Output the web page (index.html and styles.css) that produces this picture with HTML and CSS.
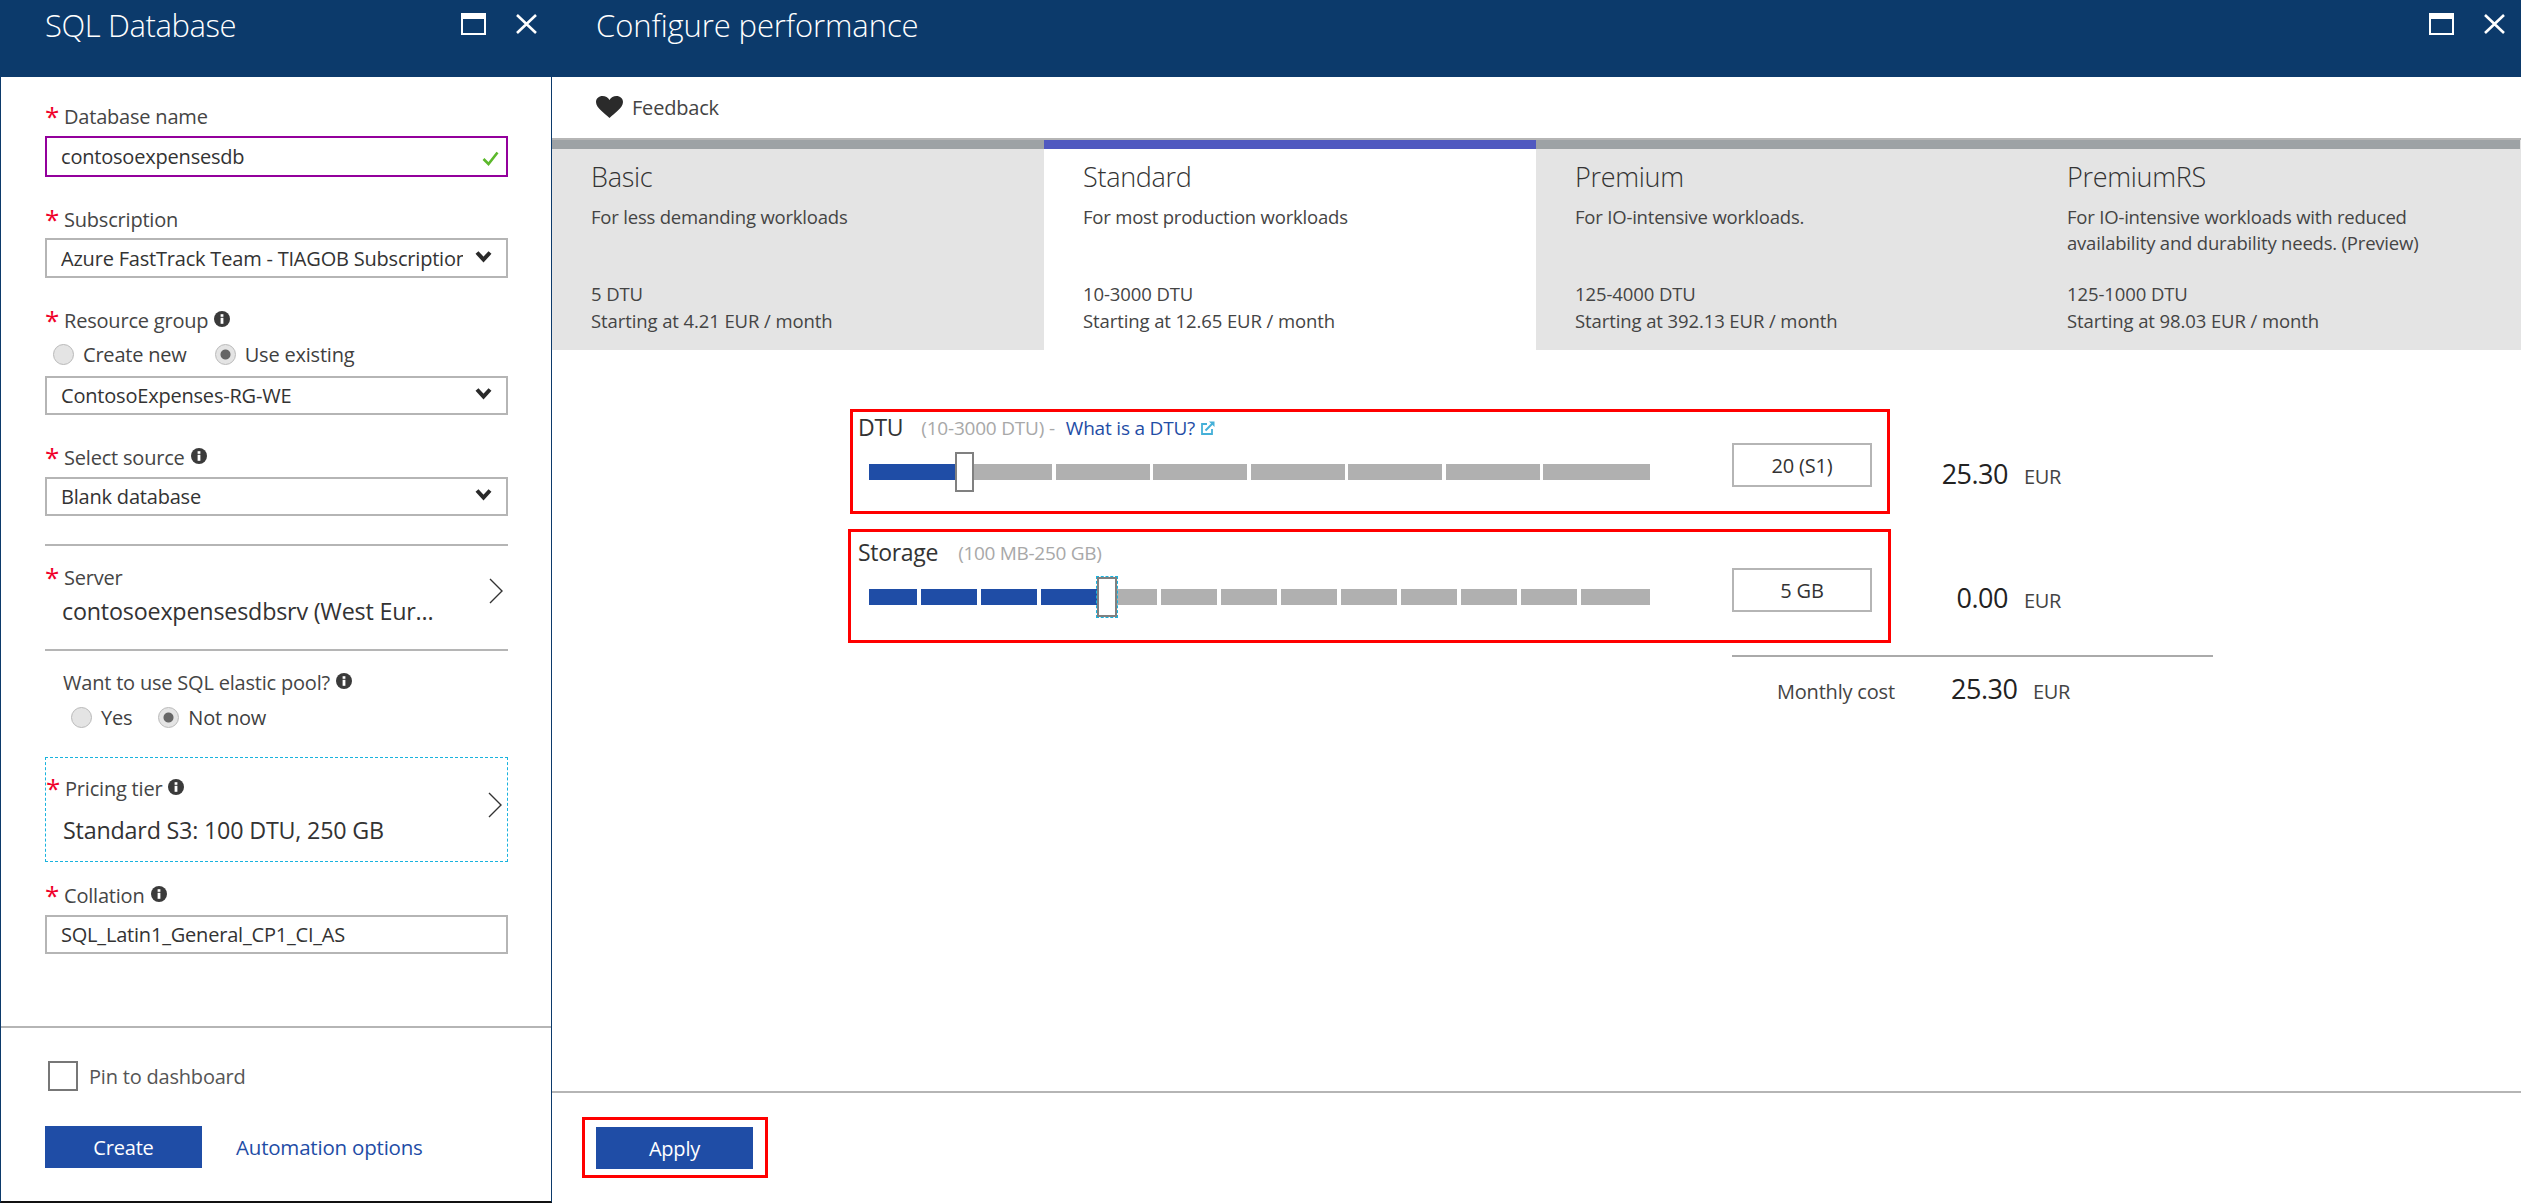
FILE: index.html
```html
<!DOCTYPE html>
<html lang="en">
<head>
<meta charset="utf-8">
<title>SQL Database</title>
<link rel="stylesheet" href="styles.css">
</head>
<body>
<svg class="defs" width="0" height="0" aria-hidden="true">
  <symbol id="info" viewBox="0 0 16 16"><circle cx="8" cy="8" r="8" fill="#3a3a3a"/><rect x="6.6" y="6.8" width="2.8" height="6" fill="#fff"/><rect x="6.6" y="3.2" width="2.8" height="2.6" fill="#fff"/></symbol>
  <symbol id="chev" viewBox="0 0 17 13"><path d="M2 2.5 8.5 9.5 15 2.5" fill="none" stroke="#2a2a2a" stroke-width="4"/></symbol>
  <symbol id="right" viewBox="0 0 14 26"><path d="M1 1 13 13 1 25" fill="none" stroke="#333" stroke-width="1.4"/></symbol>
  <symbol id="maxi" viewBox="0 0 25 22"><path fill="#fff" fill-rule="evenodd" d="M0 0H25V22H0ZM2 6V20H23V6Z"/></symbol>
  <symbol id="close" viewBox="0 0 21 20"><path d="M1 1 20 19M20 1 1 19" fill="none" stroke="#fff" stroke-width="2.6"/></symbol>
</svg>

<section class="blade blade-left">
  <header class="blade-head">
    <h1 class="blade-title">SQL Database</h1>
    <div class="blade-actions">
      <svg class="icon-max"><use href="#maxi"/></svg>
      <svg class="icon-close"><use href="#close"/></svg>
    </div>
  </header>
  <div class="form">
    <div class="label first"><span class="star">*</span>Database name</div>
    <div class="box box-active">
      <span class="box-text">contosoexpensesdb</span>
      <svg class="check" viewBox="0 0 17 15"><path d="M1.5 8 6.500 13 15.500 1.500" fill="none" stroke="#5cb82c" stroke-width="2.6"/></svg>
    </div>
    <div class="label"><span class="star">*</span>Subscription</div>
    <div class="box"><span class="box-text box-clip">Azure FastTrack Team - TIAGOB Subscription</span><svg class="chev"><use href="#chev"/></svg></div>
    <div class="label"><span class="star">*</span>Resource group<svg class="info"><use href="#info"/></svg></div>
    <div class="radios radios-rg">
      <span class="radio"></span><span class="radio-text gap-rg">Create new</span>
      <span class="radio radio-on"></span><span class="radio-text">Use existing</span>
    </div>
    <div class="box box-after-radio"><span class="box-text">ContosoExpenses-RG-WE</span><svg class="chev"><use href="#chev"/></svg></div>
    <div class="label"><span class="star">*</span>Select source<svg class="info"><use href="#info"/></svg></div>
    <div class="box box-source"><span class="box-text">Blank database</span><svg class="chev"><use href="#chev"/></svg></div>
    <div class="picker picker-server">
      <div class="picker-main">
        <div class="label label-plain"><span class="star">*</span>Server</div>
        <div class="picker-value">contosoexpensesdbsrv (West Eur...</div>
      </div>
      <svg class="right"><use href="#right"/></svg>
    </div>
    <div class="label label-want">Want to use SQL elastic pool?<svg class="info"><use href="#info"/></svg></div>
    <div class="radios radios-pool">
      <span class="radio"></span><span class="radio-text gap-pool">Yes</span>
      <span class="radio radio-on"></span><span class="radio-text">Not now</span>
    </div>
    <div class="picker picker-tier">
      <div class="picker-main">
        <div class="label label-plain"><span class="star">*</span>Pricing tier<svg class="info"><use href="#info"/></svg></div>
        <div class="picker-value">Standard S3: 100 DTU, 250 GB</div>
      </div>
      <svg class="right"><use href="#right"/></svg>
    </div>
    <div class="label label-coll"><span class="star">*</span>Collation<svg class="info"><use href="#info"/></svg></div>
    <div class="box box-coll"><span class="box-text">SQL_Latin1_General_CP1_CI_AS</span></div>
  </div>
  <footer class="left-foot">
    <div class="pin"><span class="checkbox"></span><span class="pin-text">Pin to dashboard</span></div>
    <div class="left-actions">
      <button class="btn">Create</button>
      <a class="auto-link">Automation options</a>
    </div>
  </footer>
</section>

<section class="blade blade-right">
  <header class="blade-head">
    <h1 class="blade-title blade-title-wide">Configure performance</h1>
    <div class="blade-actions">
      <svg class="icon-max"><use href="#maxi"/></svg>
      <svg class="icon-close"><use href="#close"/></svg>
    </div>
  </header>
  <div class="toolbar">
    <svg class="heart" viewBox="0 0 27 22"><path fill="#2b2b2b" d="M13.5 22C9 17.5 0 12 0 6 0 2.500 3 0 6.500 0 9.500 0 12 1.500 13.500 4 15 1.500 17.500 0 20.500 0 24 0 27 2.500 27 6 27 12 18 17.500 13.500 22Z"/></svg>
    <span class="toolbar-text">Feedback</span>
  </div>
  <div class="tabs">
    <article class="tab">
      <h2 class="tab-title">Basic</h2>
      <p class="tab-desc">For less demanding workloads</p>
      <p class="tab-meta">5 DTU<br>Starting at 4.21 EUR / month</p>
    </article>
    <article class="tab tab-on">
      <h2 class="tab-title">Standard</h2>
      <p class="tab-desc">For most production workloads</p>
      <p class="tab-meta">10-3000 DTU<br>Starting at 12.65 EUR / month</p>
    </article>
    <article class="tab">
      <h2 class="tab-title">Premium</h2>
      <p class="tab-desc">For IO-intensive workloads.</p>
      <p class="tab-meta">125-4000 DTU<br>Starting at 392.13 EUR / month</p>
    </article>
    <article class="tab">
      <h2 class="tab-title">PremiumRS</h2>
      <p class="tab-desc">For IO-intensive workloads with reduced<br>availability and durability needs. (Preview)</p>
      <p class="tab-meta">125-1000 DTU<br>Starting at 98.03 EUR / month</p>
    </article>
  </div>
  <main class="config">
    <div class="row row-dtu">
      <div class="red red-dtu">
        <div class="control">
          <div class="ctl-head"><span class="ctl-name">DTU</span><span class="ctl-range range-dtu">(10-3000 DTU) -</span><a class="ctl-link">What is a DTU?</a>
            <svg class="ext" viewBox="0 0 14 14"><path d="M11 8V13H1V3H6" fill="none" stroke="#45b0d8" stroke-width="1.8"/><path d="M4.500 9.500 12 2" fill="none" stroke="#45b0d8" stroke-width="2"/><path d="M8 0.500H13.500V6Z" fill="#45b0d8"/></svg>
          </div>
          <div class="track track-dtu">
            <span class="seg seg-dtu-first"><span class="seg-fill fill-dtu"></span></span>
            <span class="seg seg-dtu"></span><span class="seg seg-dtu"></span><span class="seg seg-dtu"></span><span class="seg seg-dtu"></span><span class="seg seg-dtu"></span><span class="seg seg-last"></span>
            <span class="thumb thumb-dtu"></span>
          </div>
        </div>
        <div class="value">20 (S1)</div>
      </div>
      <div class="price price-dtu"><span class="price-num">25.30</span><span class="price-cur">EUR</span></div>
    </div>
    <div class="row row-storage">
      <div class="red red-storage">
        <div class="control control-storage">
          <div class="ctl-head"><span class="ctl-name">Storage</span><span class="ctl-range range-storage">(100 MB-250 GB)</span></div>
          <div class="track track-storage">
            <span class="seg seg-blue seg-st-first"></span><span class="seg seg-blue seg-st"></span><span class="seg seg-blue seg-st"></span>
            <span class="seg seg-st-fillwrap"><span class="seg-fill fill-st"></span></span>
            <span class="seg seg-st"></span><span class="seg seg-st"></span><span class="seg seg-st"></span><span class="seg seg-st"></span><span class="seg seg-st"></span><span class="seg seg-st"></span><span class="seg seg-st"></span><span class="seg seg-last"></span>
            <span class="thumb thumb-st"></span>
          </div>
        </div>
        <div class="value value-storage">5 GB</div>
      </div>
      <div class="price price-storage"><span class="price-num">0.00</span><span class="price-cur">EUR</span></div>
    </div>
    <div class="summary">
      <span class="summary-label">Monthly cost</span>
      <span class="summary-num">25.30</span><span class="price-cur summary-cur">EUR</span>
    </div>
  </main>
  <footer class="right-foot">
    <div class="apply-mark"><button class="btn">Apply</button></div>
  </footer>
</section>
</body>
</html>
```

FILE: styles.css
```css
* { box-sizing: border-box; }
html, body { margin: 0; padding: 0; }
body {
  width: 2521px;
  height: 1203px;
  overflow: hidden;
  display: flex;
  background: #fff;
  color: #3a3a3a;
  font-family: "Open Sans", "Noto Sans", sans-serif;
  font-size: 20px;
}
.defs { position: absolute; }

/* blades */
.blade { display: flex; flex-direction: column; height: 1203px; }
.blade-left { width: 552px; border-left: 1px solid #0c3a6b; border-right: 1px solid #0c3a6b; border-bottom: 2px solid #111; }
.blade-right { flex: 1; min-width: 0; }
.blade-head {
  height: 77px;
  flex: none;
  background: #0c3a6b;
  display: flex;
  align-items: flex-start;
  justify-content: space-between;
}
.blade-left .blade-head { margin: 0 -1px; padding: 0 15px 0 45px; }
.blade-right .blade-head { padding: 0 16px 0 44px; }
.blade-title {
  margin: 6px 0 0;
  font-size: 31px;
  line-height: 38px;
  font-weight: 300;
  color: #fff;
  letter-spacing: -0.4px;
}
.blade-title-wide { letter-spacing: -0.1px; }
.blade-actions { display: flex; align-items: center; gap: 30px; padding-top: 13px; }
.icon-max { width: 25px; height: 22px; }
.icon-close { width: 21px; height: 20px; }

/* form */
.form { flex: 1; padding-left: 44px; width: 507px; }
.label {
  display: flex;
  align-items: center;
  height: 24px;
  margin-top: 30px;
  font-size: 20px;
  color: #454545;
  letter-spacing: -0.2px;
}
.label.first { margin-top: 27px; }
.star {
  width: 19px;
  flex: none;
  height: 24px;
  color: #f0002a;
  font-size: 26px;
  line-height: 24px;
  letter-spacing: 0;
}
.info { width: 16px; height: 16px; margin-left: 6px; margin-top: -2px; flex: none; }
.box {
  height: 40px;
  margin-top: 7px;
  border: 2px solid #b5b5b5;
  display: flex;
  align-items: center;
  justify-content: space-between;
  padding: 0 14px 0 14px;
}
.box-active { height: 41px; margin-top: 8px; border-color: #93009c; }
.box-text { font-size: 20px; color: #333; white-space: nowrap; letter-spacing: -0.2px; }
.box-clip { width: 402px; overflow: hidden; }
.check { width: 17px; height: 15px; margin-right: -7px; margin-left: auto; margin-top: 3px; flex: none; }
.chev { width: 17px; height: 13px; flex: none; margin-top: -4px; margin-right: 0; }
.box-after-radio { margin-top: 11px; height: 39px; }
.box-source { margin-top: 8px; height: 39px; }
.box-coll { margin-top: 8px; height: 39px; }

.radios { display: flex; align-items: center; height: 22px; font-size: 20px; }
.radios-rg { margin-top: 11px; margin-bottom: 1px; padding-left: 8px; }
.radios-pool { margin-top: 12px; padding-left: 26px; }
.radio {
  width: 21px;
  height: 21px;
  border-radius: 50%;
  flex: none;
  border: 1px solid #b9b9b9;
  background: #e4e4e4;
  position: relative;
}
.radio-on { background: radial-gradient(circle, #666 0 4.5px, #e4e4e4 5.500px); }
.radio-text { margin-left: 9px; color: #3f3f3f; letter-spacing: -0.2px; }
.gap-rg { margin-right: 28px; }
.gap-pool { margin-right: 26px; }

/* pickers */
.picker { display: flex; justify-content: space-between; align-items: center; }
.picker-main { flex: 1; min-width: 0; }
.picker-server {
  margin-top: 28px;
  height: 107px;
  border-top: 2px solid #b5b5b5;
  border-bottom: 2px solid #b5b5b5;
  padding: 19px 5px 0 0;
  align-items: flex-start;
}
.label-plain { margin-top: 0; }
.picker-value { margin: 8px 0 0 17px; height: 28px; line-height: 28px; font-size: 23.3px; color: #333; letter-spacing: -0.2px; white-space: nowrap; }
.right { width: 14px; height: 26px; flex: none; margin-top: 13px; }
.label-want { margin-top: 19px; padding-left: 18px; }
.picker-tier {
  margin-top: 29px;
  height: 105px;
  border: 1px dashed #19b3de;
  padding: 18px 5px 0 0;
  align-items: flex-start;
}
.picker-tier .right { margin-top: 16px; }
.picker-tier .picker-value { margin: 16px 0 0 17px; }
.label-coll { margin-top: 21px; }

/* left footer */
.left-foot { flex: none; height: 175px; border-top: 2px solid #b5b5b5; padding: 33px 0 0 44px; }
.pin { display: flex; align-items: center; height: 30px; }
.checkbox { width: 30px; height: 30px; margin-left: 3px; border: 2px solid #777; flex: none; }
.pin-text { margin-left: 11px; color: #555; letter-spacing: -0.2px; }
.left-actions { display: flex; align-items: center; margin-top: 35px; }
.btn {
  width: 157px;
  height: 42px;
  border: 0;
  padding: 0;
  background: #1f4da6;
  color: #fff;
  font: inherit;
  font-size: 20px;
  letter-spacing: -0.2px;
}
.auto-link { margin-left: 34px; color: #1f4da6; font-size: 20.5px; letter-spacing: -0.2px; }

/* right blade */
.toolbar { height: 61px; flex: none; display: flex; align-items: center; padding-left: 44px; }
.heart { width: 27px; height: 22px; margin-top: -2px; }
.toolbar-text { margin-left: 9px; font-size: 20px; color: #444; letter-spacing: -0.2px; }
.tabs {
  flex: none;
  display: grid;
  grid-template-columns: repeat(4, 492px);
  border-top: 2px solid #b5b5b5;
  background: #e4e4e4;
  height: 212px;
}
.tab { border-top: 9px solid #9da2a5; padding: 13px 0 0 39px; display: flex; flex-direction: column; height: 210px; }
.tab-on { background: #fff; border-top-color: #5059c0; }
.tab-title { margin: 0; font-size: 27px; line-height: 30px; font-weight: 300; color: #333; letter-spacing: -0.3px; }
.tab-desc { margin: 12px 0 0; font-size: 18.5px; line-height: 26px; color: #444; height: 76px; letter-spacing: -0.2px; }
.tab-meta { margin: 0; font-size: 18.5px; line-height: 27px; color: #444; letter-spacing: -0.1px; }

/* config */
.config { flex: 1; padding: 59px 0 0 296px; }
.row { display: flex; align-items: flex-start; }
.row-storage { margin-top: 15px; }
.red { display: flex; align-items: flex-start; border: 3px solid #f00; }
.red-dtu { width: 1040px; height: 105px; margin-left: 2px; padding-left: 16px; }
.red-storage { width: 1043px; height: 114px; padding: 5px 0 0 18px; }
.control { width: 781px; }
.ctl-head { display: flex; align-items: center; height: 32px; margin-left: -11px; white-space: nowrap; }
.ctl-name { font-size: 23px; color: #333; letter-spacing: -0.3px; margin-top: -2px; }
.ctl-range { font-size: 19px; color: #a8a8a8; letter-spacing: -0.2px; }
.range-dtu { margin-left: 18px; }
.range-storage { margin-left: 20px; letter-spacing: -0.3px; }
.ctl-link { margin-left: 11px; font-size: 19px; color: #1f4da6; letter-spacing: -0.2px; }
.ext { width: 14px; height: 14px; margin-left: 6px; }
.track { display: flex; height: 16px; margin-top: 20px; position: relative; }
.track-dtu { gap: 3.5px; }
.track-storage { gap: 4px; }
.seg { display: block; height: 16px; background: #b0b0b0; flex: none; }
.seg-blue { background: #1f4da6; }
.seg-fill { display: block; height: 16px; background: #1f4da6; }
.seg-dtu-first { width: 183px; }
.fill-dtu { width: 87px; }
.seg-dtu { width: 94px; }
.seg-last { flex: 1; }
.seg-st-first { width: 48px; }
.seg-st { width: 56px; }
.seg-st-fillwrap { width: 116px; }
.fill-st { width: 57px; }
.thumb { position: absolute; background: #fff; border: 2px solid #808080; width: 19px; height: 40px; top: -12px; }
.thumb-dtu { left: 86px; }
.thumb-st { left: 228px; width: 20px; outline: 1px dashed #19b3de; }
.value {
  width: 140px;
  height: 44px;
  margin: 31px 0 0 82px;
  border: 2px solid #b5b5b5;
  display: flex;
  align-items: center;
  justify-content: center;
  font-size: 20px;
  color: #333;
  letter-spacing: -0.2px;
}
.price { display: flex; align-items: baseline; }
.price-dtu { margin-top: 49px; }
.price-storage { margin-top: 53px; margin-left: -1px; }
.price-num { width: 118px; text-align: right; font-size: 27px; line-height: 32px; color: #222; letter-spacing: -0.5px; }
.price-cur { margin-left: 16px; font-size: 20px; color: #444; letter-spacing: -0.3px; }
.summary {
  margin: 12px 0 0 884px;
  width: 481px;
  border-top: 2px solid #aaa;
  display: flex;
  align-items: baseline;
  padding: 16px 0 0 45px;
}
.summary-label { width: 174px; font-size: 20px; color: #444; letter-spacing: -0.2px; }
.summary-num { width: 66px; font-size: 27px; line-height: 32px; color: #222; letter-spacing: -0.5px; }
.right-foot { flex: none; height: 112px; border-top: 2px solid #b5b5b5; padding: 24px 0 0 30px; }
.apply-mark { display: inline-flex; border: 3px solid #f00; padding: 7px 12px 6px 11px; }
```
